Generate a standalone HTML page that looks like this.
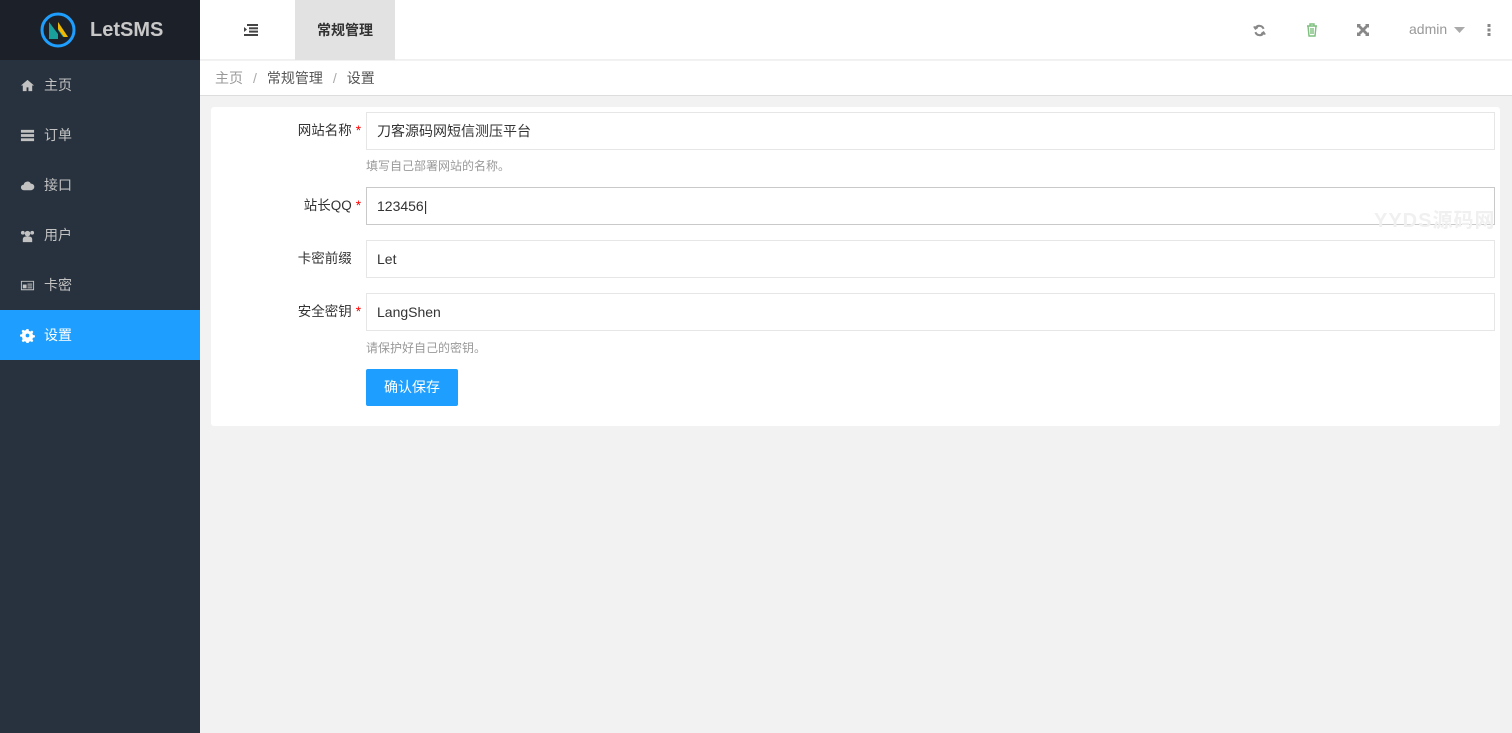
<!DOCTYPE html>
<html><head><meta charset="utf-8"><style>
*{box-sizing:border-box;margin:0;padding:0}
body{width:1512px;height:733px;overflow:hidden;background:#f2f2f2;font-family:"Liberation Sans","Noto Sans CJK SC",sans-serif;font-size:14px;position:relative}
.side{position:absolute;left:0;top:0;width:200px;height:733px;background:#28323e}
.logo{height:60px;background:#1c2129;display:flex;align-items:center;padding-left:40px;color:#c8c8c8;font-weight:bold;font-size:20px}
.logo svg{margin-right:14px}
.nav div{height:50px;display:flex;align-items:center;padding-left:20px;color:#c2c2c2;font-size:14px}
.nav svg{width:15px;height:15px;margin-right:9px;fill:#c2c2c2}
.nav .on{background:#1e9fff;color:#fff}
.nav .on svg{fill:#fff}
.top{position:absolute;left:200px;top:0;right:0;height:60px;background:#fff;border-bottom:1px solid #f0f0f0}
.tab{position:absolute;left:95px;top:0;width:100px;height:60px;background:#e2e2e2;font-weight:bold;color:#333;text-align:center;line-height:60px}
.bc{position:absolute;left:200px;top:61px;right:0;height:35px;background:#fff;border-bottom:1px solid #ddd;padding-left:15px;line-height:34px;color:#555;font-size:14px}
.bc .g{color:#999}.bc .s{color:#aaa;margin:0 10px}
.card{position:absolute;left:211px;top:107px;width:1289px;height:319px;background:#fff;border-radius:3px}
.row{position:absolute;left:0;width:100%}
.lab{position:absolute;left:0;width:150px;text-align:right;color:#333;line-height:38px;font-size:13.5px}
.lab i{color:#f00;font-style:normal;margin-left:4px}
.inp{position:absolute;left:155px;width:1129px;height:38px;border:1px solid #e6e6e6;padding-left:10px;line-height:36px;color:#333}
.tip{position:absolute;left:155px;color:#999;font-size:12px}
.btn{position:absolute;left:155px;top:262px;width:92px;height:37px;background:#1e9fff;color:#fff;line-height:37px;text-align:center;border-radius:2px;font-size:14px}
.scr{position:absolute;right:0;top:96px;width:12px;height:637px;background:#f1f1f1}
</style></head><body>
<div class="side">
 <div class="logo"><svg width="36" height="36" viewBox="0 0 36 36"><circle cx="18" cy="18" r="16" fill="none" stroke="#1e9fff" stroke-width="3"/><path d="M9 27V10l9 12V10l10 15h-5l-5-7v9z" fill="#1aa09a"/><path d="M18 10l10 15h-4l-6-8z" fill="#f5b800"/></svg>LetSMS</div>
 <div class="nav">
  <div><svg viewBox="0 0 16 16"><path d="M8 2L1 8h2v6h4v-4h2v4h4V8h2z"/></svg>主页</div>
  <div><svg viewBox="0 0 16 16"><rect x="1" y="2" width="14" height="3"/><rect x="1" y="6.5" width="14" height="3"/><rect x="1" y="11" width="14" height="3"/></svg>订单</div>
  <div><svg viewBox="0 0 16 16"><path d="M4 13a3 3 0 010-6 4 4 0 017.5-1A3.5 3.5 0 0112 13z"/></svg>接口</div>
  <div><svg viewBox="0 0 16 16"><circle cx="8" cy="6" r="3"/><circle cx="3" cy="5" r="2"/><circle cx="13" cy="5" r="2"/><path d="M3 15v-3a3 3 0 013-3h4a3 3 0 013 3v3z"/></svg>用户</div>
  <div><svg viewBox="0 0 16 16"><path d="M1 3h14v10H1zM2 4v8h12V4z"/><rect x="3" y="7" width="4" height="4"/><rect x="8" y="6" width="5" height="1"/><rect x="8" y="8" width="5" height="1"/><rect x="8" y="10" width="5" height="1"/></svg>卡密</div>
  <div class="on"><svg viewBox="0 0 16 16"><path d="M7 1h2l.5 2 1.5.7 1.8-1 1.4 1.4-1 1.8.7 1.5 2 .5v2l-2 .5-.7 1.5 1 1.8-1.4 1.4-1.8-1-1.5.7-.5 2H7l-.5-2-1.5-.7-1.8 1-1.4-1.4 1-1.8L2.1 9.5 0 9V7l2-.5.7-1.5-1-1.8 1.4-1.4 1.8 1 1.5-.7zM8 6a2 2 0 100 4 2 2 0 000-4z"/></svg>设置</div>
 </div>
</div>
<div class="top">
 <svg style="position:absolute;left:44px;top:24px" width="14" height="12" viewBox="0 0 14 12" fill="#444"><rect x="3" y="0" width="11" height="2"/><rect x="5" y="3.3" width="9" height="2"/><rect x="5" y="6.6" width="9" height="2"/><rect x="0" y="10" width="14" height="2"/><path d="M0 3l3 2.5L0 8z"/></svg>
 <div class="tab">常规管理</div>
 <svg style="position:absolute;left:1053px;top:24px" width="13" height="13" viewBox="0 0 16 16" fill="none" stroke="#888" stroke-width="2.5"><path d="M13 6A5.5 5.5 0 003 5M3 10a5.5 5.5 0 0010 1"/><path d="M1 3l2 3 3-2M15 13l-2-3-3 2" stroke-width="2"/></svg>
 <svg style="position:absolute;left:1106px;top:23px" width="12" height="14" viewBox="0 0 12 14" fill="none" stroke="#7fbf7f" stroke-width="1.4"><path d="M1 3h10M4 3V1h4v2M2 3l1 10h6l1-10M5 5v6M7 5v6"/></svg>
 <svg style="position:absolute;left:1157px;top:24px" width="12" height="12" viewBox="0 0 12 12" fill="#888"><path d="M0 0h4L3 1l3 3 3-3-1-1h4v4l-1-1-3 3 3 3 1-1v4H8l1-1-3-3-3 3 1 1H0V8l1 1 3-3-3-3-1 1z"/></svg>
 <span style="position:absolute;left:1209px;top:21px;color:#999;font-size:14px">admin</span>
 <svg style="position:absolute;left:1254px;top:27px" width="11" height="6" viewBox="0 0 11 6" fill="#aaa"><path d="M0 0h11L5.5 6z"/></svg>
 <svg style="position:absolute;left:1287px;top:24px" width="4" height="12" viewBox="0 0 4 12" fill="#888"><rect x="0.5" y="0" width="3" height="3"/><rect x="0.5" y="4.5" width="3" height="3"/><rect x="0.5" y="9" width="3" height="3"/></svg>
</div>
<div class="bc"><span class="g">主页</span><span class="s">/</span>常规管理<span class="s">/</span>设置</div>
<div class="card">
 <div class="row" style="top:5px"><div class="lab">网站名称<i>*</i></div><div class="inp">刀客源码网短信测压平台</div></div>
 <div class="tip" style="top:50px">填写自己部署网站的名称。</div>
 <div class="row" style="top:80px"><div class="lab">站长QQ<i>*</i></div><div class="inp" style="border-color:#c9c9c9">123456|</div></div>
 <div class="row" style="top:133px"><div class="lab">卡密前缀<i style="color:transparent">*</i></div><div class="inp">Let</div></div>
 <div class="row" style="top:186px"><div class="lab">安全密钥<i>*</i></div><div class="inp">LangShen</div></div>
 <div class="tip" style="top:232px">请保护好自己的密钥。</div>
 <div class="btn">确认保存</div>
</div>
<div style="position:absolute;left:1374px;top:204px;color:#f0f0f0;font-size:20px;font-weight:bold;letter-spacing:1px">YYDS源码网</div>
<div class="scr"></div>
</body></html>
